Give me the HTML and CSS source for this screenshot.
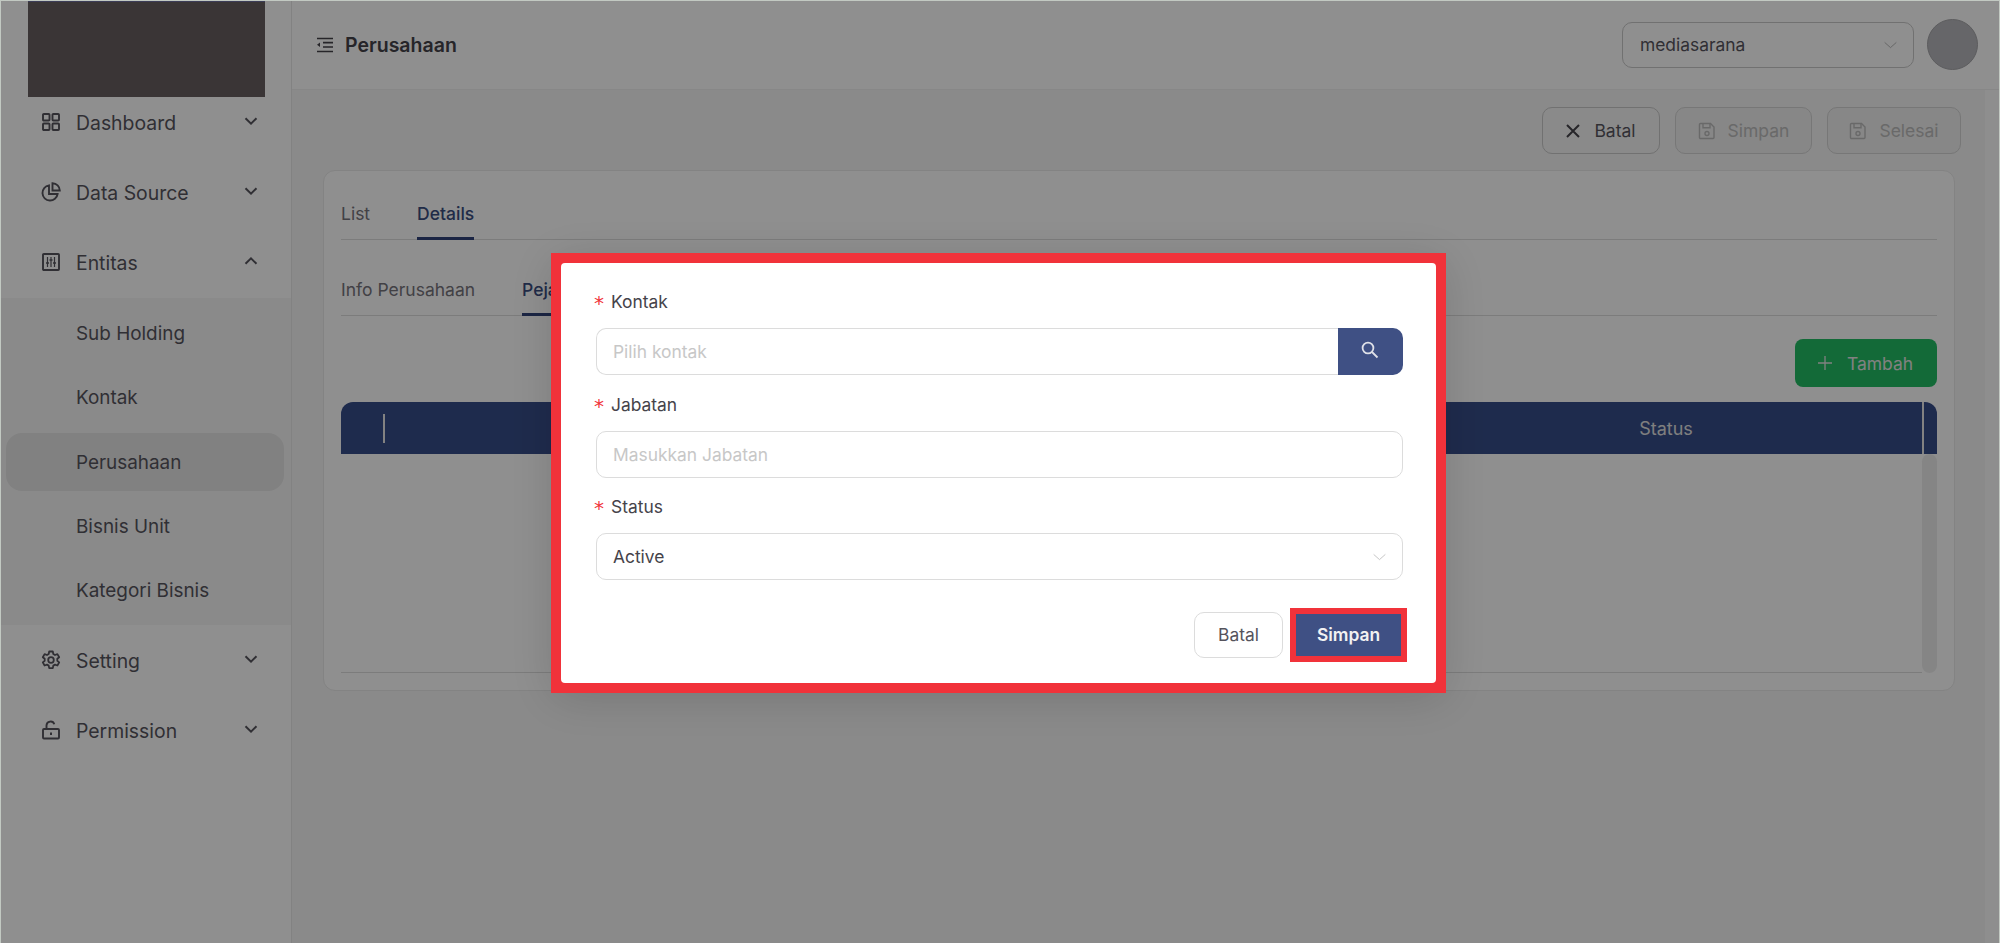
FILE: index.html
```html
<!DOCTYPE html>
<html>

<head>
    <meta charset="utf-8">
    <title>Perusahaan</title>
    <link rel="stylesheet" href="styles.css">
</head>

<body>
    <svg class="defs" width="0" height="0">
        <symbol id="chev" viewBox="0 0 14 8">
            <path d="M1.5 1.2 7 6.6l5.5-5.4" fill="none" stroke="currentColor" stroke-width="2" />
        </symbol>
        <symbol id="thin-chev" viewBox="0 0 20 10">
            <path d="M1 1l9 8 9-8" fill="none" stroke="currentColor" stroke-width="1.2" />
        </symbol>
        <symbol id="save" viewBox="0 0 18 18">
            <path d="M2.5 1.5h10l3.5 3.5v10.5a1 1 0 0 1-1 1H2.5a1 1 0 0 1-1-1v-13a1 1 0 0 1 1-1z" fill="none" stroke="currentColor" stroke-width="1.4" />
            <path d="M5 1.8v4h7v-4" fill="none" stroke="currentColor" stroke-width="1.4" />
            <circle cx="9" cy="11.5" r="2" fill="none" stroke="currentColor" stroke-width="1.4" />
        </symbol>
    </svg>

    <div class="app">
        <!-- 侧边栏 -->
        <aside class="sidebar">
            <div class="logo"></div>
            <div class="menu-item">
                <svg class="menu-icon" viewBox="0 0 20 20" fill="none" stroke="currentColor" stroke-width="1.9">
                    <rect x="2" y="2" width="6.5" height="6.5" rx=".8" />
                    <rect x="11.5" y="2" width="6.5" height="6.5" rx=".8" />
                    <rect x="2" y="11.5" width="6.5" height="6.5" rx=".8" />
                    <rect x="11.5" y="11.5" width="6.5" height="6.5" rx=".8" />
                </svg>
                <span class="menu-text">Dashboard</span>
                <svg class="chev"><use href="#chev" /></svg>
            </div>
            <div class="menu-item">
                <svg class="menu-icon" viewBox="0 0 20 20" fill="none" stroke="currentColor" stroke-width="1.9">
                    <path d="M8 3.4a7.6 7.6 0 1 0 8.6 8.6H8z" />
                    <path d="M11.5 1.2a7.4 7.4 0 0 1 7.3 7.3h-7.3z" />
                </svg>
                <span class="menu-text">Data Source</span>
                <svg class="chev"><use href="#chev" /></svg>
            </div>
            <div class="menu-item">
                <svg class="menu-icon" viewBox="0 0 20 20" fill="none" stroke="currentColor" stroke-width="1.9">
                    <rect x="2" y="2" width="16" height="16" rx=".8" />
                    <path d="M6.5 5v10M10 5v10M13.5 5v10" stroke-width="1.2" />
                    <path d="M5 11h3M8.5 8h3M12 11h3" stroke-width="1.6" />
                </svg>
                <span class="menu-text">Entitas</span>
                <svg class="chev up"><use href="#chev" /></svg>
            </div>
            <div class="submenu">
                <div class="sub-item">Sub Holding</div>
                <div class="sub-item">Kontak</div>
                <div class="sub-item sub-active">Perusahaan</div>
                <div class="sub-item">Bisnis Unit</div>
                <div class="sub-item">Kategori Bisnis</div>
            </div>
            <div class="menu-item">
                <svg class="menu-icon" viewBox="0 0 20 20" fill="none" stroke="currentColor" stroke-width="1.8">
                    <path d="M8.2 1.5h3.6l.5 2.5 1.7 1 2.4-.9 1.8 3.1-1.9 1.6v2l1.9 1.6-1.8 3.1-2.4-.9-1.7 1-.5 2.5H8.2l-.5-2.5-1.7-1-2.4.9-1.8-3.1 1.9-1.6v-2L1.8 7.2l1.8-3.1 2.4.9 1.7-1z" stroke-linejoin="round" />
                    <circle cx="10" cy="10" r="2.8" />
                </svg>
                <span class="menu-text">Setting</span>
                <svg class="chev"><use href="#chev" /></svg>
            </div>
            <div class="menu-item">
                <svg class="menu-icon" viewBox="0 0 20 20" fill="none" stroke="currentColor" stroke-width="1.9">
                    <rect x="2" y="9" width="16" height="9.5" rx="1" />
                    <path d="M5.5 9V5.5a4 4 0 0 1 7.8-1.2" />
                    <path d="M10 12.5v2.5" stroke-width="2" />
                </svg>
                <span class="menu-text">Permission</span>
                <svg class="chev"><use href="#chev" /></svg>
            </div>
        </aside>

        <div class="main">
            <!-- 顶部 -->
            <header class="topbar">
                <svg class="collapse" viewBox="0 0 17 16" fill="none" stroke="currentColor">
                    <path d="M1 1.5h16M7 5.7h10M7 10h10M1 14.5h16" stroke-width="1.7" />
                    <path d="M4 5.5 1 7.8l3 2.2z" fill="currentColor" stroke="none" />
                </svg>
                <div class="page-title">Perusahaan</div>
                <div class="company-select">
                    <span>mediasarana</span>
                    <svg class="thin-chev"><use href="#thin-chev" /></svg>
                </div>
                <div class="avatar"></div>
            </header>

            <div class="body-wrap">
                <div class="content">
                    <div class="toolbar">
                        <div class="tool-btn tool-batal">
                            <svg class="tool-x" viewBox="0 0 14 14" fill="none" stroke="currentColor" stroke-width="2">
                                <path d="M1 1l12 12M13 1 1 13" />
                            </svg>
                            Batal
                        </div>
                        <div class="tool-btn tool-off tool-simpan">
                            <svg class="tool-save"><use href="#save" /></svg>
                            Simpan
                        </div>
                        <div class="tool-btn tool-off tool-selesai">
                            <svg class="tool-save"><use href="#save" /></svg>
                            Selesai
                        </div>
                    </div>

                    <div class="card">
                        <div class="tabs">
                            <div class="tab tab-list">List</div>
                            <div class="tab tab-on">Details</div>
                        </div>
                        <div class="tabs tabs2">
                            <div class="tab tab-info">Info Perusahaan</div>
                            <div class="tab tab-on">Pejabat</div>
                        </div>
                        <div class="add-row">
                            <div class="add-btn">
                                <svg class="plus" viewBox="0 0 16 16" fill="none" stroke="currentColor" stroke-width="1.3">
                                    <path d="M8 1v14M1 8h14" />
                                </svg>
                                Tambah
                            </div>
                        </div>
                        <div class="thead">
                            <div class="th-first"><span class="th-line"></span></div>
                            <div></div>
                            <div class="th-status">Status</div>
                            <div class="th-end"></div>
                        </div>
                        <div class="tbody">
                            <div class="tbody-rows"></div>
                            <div class="tbody-scroll"></div>
                        </div>
                    </div>
                </div>
                <div class="track"></div>
            </div>
        </div>
    </div>

    <!-- 弹窗 -->
    <div class="overlay">
        <div class="modal">
            <div class="modal-inner">
                <label class="field-label"><span class="star">*</span>Kontak</label>
                <div class="search-group">
                    <input class="search-input" placeholder="Pilih kontak">
                    <div class="search-btn">
                        <svg class="search-icon" viewBox="0 0 18 18" width="18" height="18" fill="none" stroke="#dfe1e8" stroke-width="1.8">
                            <circle cx="7" cy="7" r="5.4" />
                            <path d="M11 11l5.5 5.5" />
                        </svg>
                    </div>
                </div>
                <label class="field-label"><span class="star">*</span>Jabatan</label>
                <input class="text-input" placeholder="Masukkan Jabatan">
                <label class="field-label"><span class="star">*</span>Status</label>
                <div class="status-select">
                    <span>Active</span>
                    <svg class="thin-chev"><use href="#thin-chev" /></svg>
                </div>
                <div class="modal-actions">
                    <div class="btn-batal">Batal</div>
                    <div class="highlight">
                        <div class="btn-simpan">Simpan</div>
                    </div>
                </div>
            </div>
        </div>
    </div>
</body>

</html>
```

FILE: styles.css
```css
* {
    box-sizing: border-box;
}

body {
    margin: 0;
    height: 943px;
    overflow: hidden;
    background-color: #f6f6f6;
    color: #57555e;
    font-family: Inter, "Liberation Sans", sans-serif;
    font-size: 18px;
}

.defs {
    position: absolute;
}

.app {
    display: flex;
    height: 943px;
}

/* sidebar */
.sidebar {
    width: 292px;
    flex: none;
    background-color: #fff;
    border-right: 1px solid #e8e8e8;
    font-size: 18.9px;
}

.logo {
    width: 237px;
    height: 97px;
    margin-left: 28px;
    background-color: #685f60;
    border-top: 2px solid #6c6e9c;
}

.menu-item {
    display: flex;
    align-items: center;
    height: 50px;
    margin-bottom: 20px;
    padding-left: 41px;
}

.menu-item:nth-child(4) {
    margin-bottom: 11px;
}

.menu-icon {
    width: 20px;
    height: 20px;
    flex: none;
    margin-right: 15px;
}

.menu-text {
    flex: 1;
    padding-top: 2px;
    font-size: 19.4px;
}

.chev {
    width: 14px;
    height: 8px;
    margin-right: 33px;
    margin-top: -3px;
}

.chev.up {
    transform: rotate(180deg);
}

.submenu {
    display: flex;
    flex-direction: column;
    gap: 6.25px;
    margin-bottom: 10px;
    padding: 6px 7px 6px 6px;
    background-color: #f6f6f6;
}

.sub-item {
    height: 58px;
    line-height: 59px;
    padding-left: 70px;
    border-radius: 16px;
}

.sub-active {
    background-color: #e6e6e6;
}

/* main */
.main {
    flex: 1;
    min-width: 0;
    display: flex;
    flex-direction: column;
}

.topbar {
    display: flex;
    align-items: center;
    height: 90px;
    flex: none;
    padding: 0 22px 0 24px;
    background-color: #fff;
    border-bottom: 1px solid #f1f1f1;
}

.collapse {
    width: 17px;
    height: 16px;
    margin-right: 12px;
    color: #45434a;
}

.page-title {
    flex: 1;
    font-size: 19.5px;
    font-weight: 600;
    color: #45434a;
}

.company-select {
    display: flex;
    align-items: center;
    justify-content: space-between;
    width: 292px;
    height: 46px;
    padding: 0 16px 0 17px;
    border: 1px solid #c9c9c9;
    border-radius: 10px;
    margin-right: 13px;
    font-size: 17.4px;
}

.thin-chev {
    width: 13px;
    height: 8px;
    color: #a3a3a3;
}

.avatar {
    width: 51px;
    height: 51px;
    border-radius: 50%;
    background-color: #b6b6bb;
    border: 1px solid #a4a4a8;
}

.body-wrap {
    flex: 1;
    display: flex;
}

.content {
    flex: 1;
    min-width: 0;
    padding: 17px 24px 0 31px;
}

.track {
    width: 15px;
    background-color: #fdfdfd;
}

.toolbar {
    display: flex;
    justify-content: flex-end;
    gap: 15px;
    margin-bottom: 16px;
}

.tool-btn {
    display: flex;
    align-items: center;
    justify-content: center;
    height: 47px;
    border: 1px solid #c9c9c9;
    border-radius: 10px;
    font-size: 17.5px;
}

.tool-batal {
    width: 118px;
}

.tool-simpan {
    width: 137px;
}

.tool-selesai {
    width: 134px;
}

.tool-off {
    background-color: #f0f0f0;
    color: #bcbcbc;
    border-color: #d4d4d4;
}

.tool-x {
    width: 14px;
    height: 14px;
    margin-right: 14px;
    color: #45434a;
}

.tool-save {
    width: 18px;
    height: 18px;
    margin-right: 12px;
}

.card {
    width: 1632px;
    height: 521px;
    margin-right: -6px;
    padding: 0 17px;
    background-color: #fff;
    border: 1px solid #e9e9e9;
    border-radius: 12px;
    font-size: 17.5px;
}

.tabs {
    display: flex;
    gap: 47px;
    height: 69px;
    border-bottom: 1px solid #ddd;
}

.tabs2 {
    height: 76px;
}

.tab {
    display: flex;
    align-items: flex-end;
    padding-bottom: 16px;
    margin-bottom: -1px;
}

.tab-list,
.tab-info {
    color: #76747c;
}

.tab-on {
    color: #3a4d80;
    font-weight: 500;
    border-bottom: 3px solid #314379;
    padding-bottom: 13px;
}

.add-row {
    display: flex;
    justify-content: flex-end;
    padding: 23px 0 15px;
}

.add-btn {
    display: flex;
    align-items: center;
    justify-content: center;
    width: 142px;
    height: 48px;
    padding-right: 2px;
    border-radius: 8px;
    background-color: #22bd64;
    color: #e6e6e6;
}

.plus {
    width: 16px;
    height: 16px;
    margin-right: 14px;
}

.thead {
    display: grid;
    grid-template-columns: 44px 1fr 510px 15px;
    height: 52px;
    background-color: #374d89;
    border-radius: 12px 12px 0 0;
    color: #e2e2e2;
    font-size: 18px;
}

.th-first {
    display: flex;
    align-items: center;
    justify-content: flex-end;
}

.th-line {
    width: 2px;
    height: 29px;
    background-color: #e8e8e8;
}

.th-status {
    display: flex;
    align-items: center;
    justify-content: center;
    padding-right: 2px;
}

.th-end {
    border-left: 2px solid #e8e8e8;
}

.tbody {
    display: flex;
    height: 219px;
}

.tbody-rows {
    flex: 1;
    border-bottom: 1px solid #ddd;
}

.tbody-scroll {
    width: 15px;
    background-color: #eee;
    border-radius: 8px;
}

/* modal */
.overlay {
    position: fixed;
    top: 0;
    left: 0;
    right: 0;
    bottom: 0;
    padding: 252px 0 0 550px;
    background-color: rgba(0, 0, 0, .44);
    border: 1px solid #c2c9c2;
    border-bottom: 0;
}

.modal {
    width: 895px;
    padding: 10px;
    background-color: #f1323a;
    box-shadow: 0 6px 45px rgba(0, 0, 0, .14);
}

.modal-inner {
    display: flex;
    flex-direction: column;
    padding: 24px 33px 21px 35px;
    background-color: #fff;
    border-radius: 4px;
    color: #45434a;
}

.field-label {
    display: flex;
    align-items: center;
    height: 28px;
    margin-bottom: 13px;
    padding-top: 1px;
    font-size: 17.4px;
}

.star {
    width: 17px;
    margin-left: -2px;
    padding-top: 3px;
    color: #f1323a;
    font-size: 20px;
    font-family: "DejaVu Sans", sans-serif;
}

input {
    height: 47px;
    padding: 0 16px;
    border: 1px solid #dcdcdc;
    border-radius: 10px;
    outline: none;
    font-family: inherit;
    font-size: 17.4px;
}

input::placeholder {
    color: #c7c7c7;
}

.text-input,
.status-select {
    margin-bottom: 14.5px;
}

.search-group {
    display: flex;
    margin-bottom: 14.5px;
}

.search-input {
    flex: 1;
    min-width: 0;
    border-right: 0;
    border-radius: 10px 0 0 10px;
}

.search-btn {
    display: flex;
    align-items: center;
    justify-content: center;
    width: 65px;
    height: 47px;
    background-color: #3f5084;
    border-radius: 0 10px 10px 0;
}

.search-icon {
    margin: -4px 2px 0 0;
}

.status-select {
    display: flex;
    align-items: center;
    justify-content: space-between;
    height: 47px;
    margin-bottom: 28px;
    padding: 0 16px;
    border: 1px solid #dcdcdc;
    border-radius: 10px;
    font-size: 17.4px;
}

.status-select .thin-chev {
    color: #b5b5b5;
}

.modal-actions {
    display: flex;
    justify-content: flex-end;
    align-items: center;
    gap: 7px;
    margin-right: -4px;
}

.btn-batal {
    width: 89px;
    height: 46px;
    line-height: 44px;
    text-align: center;
    border: 1px solid #dcdcdc;
    border-radius: 10px;
    font-size: 17.4px;
    color: #55535c;
}

.highlight {
    padding: 6px;
    background-color: #f1323a;
}

.btn-simpan {
    width: 105px;
    height: 42px;
    line-height: 42px;
    text-align: center;
    background-color: #3f5084;
    color: #f2f2f2;
    font-size: 17.4px;
    font-weight: 600;
}
```
